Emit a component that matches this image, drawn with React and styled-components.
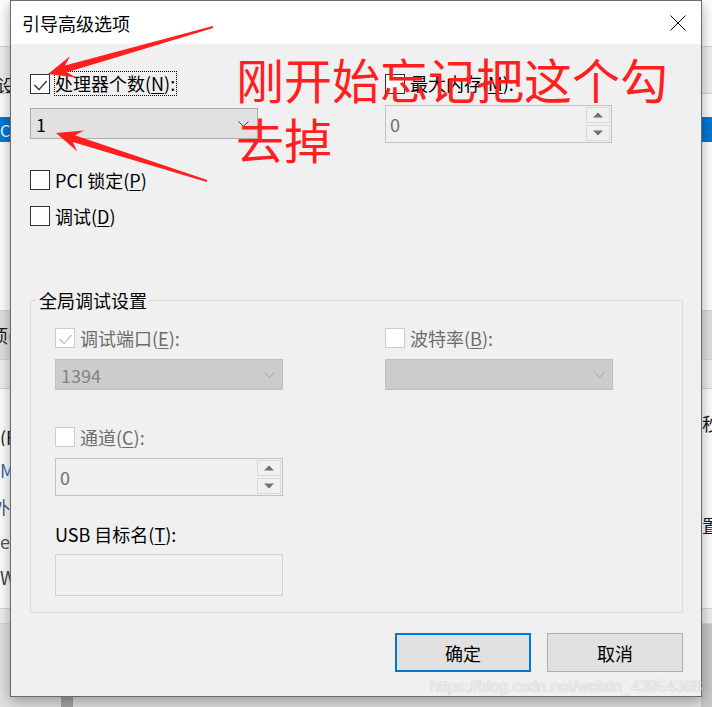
import React from 'react';
import styled, { createGlobalStyle } from 'styled-components';

const FONT = `"Noto Sans CJK SC", "Noto Sans", "Liberation Sans", sans-serif`;

const GlobalStyle = createGlobalStyle`
  *, *::before, *::after { box-sizing: border-box; }
  html, body { margin: 0; padding: 0; }
  body { width: 712px; height: 707px; overflow: hidden; background: #ffffff; font-family: ${FONT}; }
`;

const Desktop = styled.div`
  position: relative;
  width: 712px;
  height: 707px;
  overflow: hidden;
  font-family: ${FONT};
`;

/* ---------- background window ---------- */
const BgWindow = styled.div`
  display: flex;
  flex-direction: column;
  width: 100%;
  height: 100%;
`;

const BgRow = styled.div`
  display: grid;
  grid-template-columns: 10px 691px 1fr;
  height: ${(p) => p.$h}px;
  background: ${(p) => p.$bg};
  border-bottom: ${(p) => (p.$line ? '1px solid #d6d6d6' : 'none')};
  color: ${(p) => p.$color || '#1a1a1a'};
  font-size: ${(p) => p.$size || 18}px;
`;

const BgCell = styled.div`
  overflow: hidden;
  white-space: nowrap;
  line-height: 18px;
  display: flex;
  align-items: ${(p) => p.$align || 'center'};
  padding-left: ${(p) => p.$pl || 0}px;
  background: ${(p) => p.$bg || 'transparent'};
`;

const BgText = styled.span`
  display: inline-block;
  margin-left: ${(p) => p.$shift || 0}px;
  color: ${(p) => p.$color || 'inherit'};
`;

const ScrollThumb = styled.div`
  margin-left: 51px;
  width: 12px;
  height: 100%;
  background: #a6a6a6;
`;

/* ---------- dialog ---------- */
const Dialog = styled.div`
  position: absolute;
  left: 10px;
  top: 0;
  width: 692px;
  height: 697px;
  border: 1px solid #6a6a6a;
  background: #f0f0f0;
  box-shadow: 0 4px 14px rgba(0, 0, 0, 0.35);
  display: flex;
  flex-direction: column;
`;

const TitleBar = styled.div`
  flex: none;
  height: 43px;
  background: #ffffff;
  display: flex;
  align-items: center;
  justify-content: space-between;
  padding: 0 15px 0 11px;
  font-size: 18px;
  color: #000;
`;

const TitleText = styled.span`
  line-height: 20px;
`;

const Body = styled.div`
  flex: 1;
  display: flex;
  flex-direction: column;
  padding: 27px 18px 0 19px;
`;

const Columns = styled.div`
  display: grid;
  grid-template-columns: ${(p) => p.$cols};
  align-items: start;
`;

const Col = styled.div`
  display: flex;
  flex-direction: column;
  align-items: flex-start;
`;

const CheckRow = styled.div`
  display: flex;
  align-items: center;
  gap: 4px;
  height: ${(p) => p.$h || 20}px;
  margin-top: ${(p) => p.$mt || 0}px;
`;

const Box = styled.span`
  flex: none;
  width: 20px;
  height: 20px;
  display: inline-flex;
  background: #ffffff;
  border: 1px solid ${(p) => (p.$disabled ? '#cccccc' : '#333333')};
`;

const Label = styled.span`
  font-size: 18px;
  line-height: 23px;
  white-space: nowrap;
  color: ${(p) => (p.$disabled ? '#6d6d6d' : '#000')};
  border: 1px ${(p) => (p.$focus ? 'dotted #000' : 'solid transparent')};
  padding: 0 1px 0 0;
`;

const Key = styled.span`
  text-decoration: underline;
  text-underline-offset: 2px;
  text-decoration-thickness: 1px;
`;

const Combo = styled.div`
  width: ${(p) => p.$w}px;
  height: 31px;
  margin-top: ${(p) => p.$mt || 0}px;
  display: flex;
  align-items: center;
  justify-content: space-between;
  padding: 0 ${(p) => (p.$disabled ? 7 : 8)}px 0 5px;
  background: ${(p) => (p.$disabled ? '#cccccc' : '#e1e1e1')};
  border: 1px solid ${(p) => (p.$disabled ? '#bfbfbf' : '#adadad')};
  color: ${(p) => (p.$disabled ? '#838383' : '#000')};
  font-size: 18px;
  line-height: 20px;
`;

const Spin = styled.div`
  width: ${(p) => p.$w}px;
  height: 38px;
  margin-top: ${(p) => p.$mt || 0}px;
  display: flex;
  border: 1px solid #c2c2c2;
  background: #f0f0f0;
`;

const SpinValue = styled.div`
  flex: 1;
  display: flex;
  align-items: center;
  padding-left: 4px;
  color: #6d6d6d;
  font-size: 18px;
  line-height: 20px;
`;

const SpinButtons = styled.div`
  flex: none;
  width: 26px;
  display: flex;
  flex-direction: column;
  gap: 2px;
  padding: 1px;
`;

const SpinBtn = styled.div`
  flex: 1;
  display: flex;
  align-items: center;
  justify-content: center;
  border: 1px solid #d9d9d9;
  background: #f0f0f0;
`;

const TextField = styled.div`
  width: ${(p) => p.$w}px;
  height: 42px;
  margin-top: ${(p) => p.$mt || 0}px;
  border: 1px solid #d2d2d2;
  background: #f0f0f0;
`;

const PlainLabel = styled.div`
  margin-top: ${(p) => p.$mt || 0}px;
  font-size: 18px;
  line-height: 20px;
  color: #000;
  white-space: nowrap;
`;

const Group = styled.fieldset`
  margin: 64px 0 0 0;
  padding: 0;
  min-width: 0;
  border: 1px solid #dcdcdc;
`;

const Legend = styled.legend`
  margin-left: 6px;
  padding: 0 2px;
  font-size: 18px;
  line-height: 20px;
  color: #000;
`;

const GroupInner = styled.div`
  padding: 18px 0 16px 24px;
`;

const ButtonRow = styled.div`
  display: flex;
  justify-content: flex-end;
  gap: 16px;
  margin-top: 20px;
`;

const Button = styled.div`
  width: 136px;
  height: 39px;
  display: flex;
  align-items: center;
  justify-content: center;
  background: #e1e1e1;
  border: ${(p) => (p.$primary ? '2px solid #0078d7' : '1px solid #adadad')};
  font-size: 18px;
  color: #000;
`;

/* ---------- overlays ---------- */
const Annotation = styled.svg`
  position: absolute;
  left: 0;
  top: 0;
  pointer-events: none;
`;

const RedNote = styled.div`
  position: absolute;
  left: 236px;
  top: 48px;
  font-family: ${FONT};
  font-size: 48px;
  line-height: 60px;
  color: #ff1f1f;
  white-space: nowrap;
  pointer-events: none;
`;

const Watermark = styled.div`
  position: absolute;
  left: 430px;
  top: 677px;
  font-family: "Liberation Sans", Arial, sans-serif;
  font-size: 16px;
  line-height: 20px;
  color: rgba(255, 255, 255, 0.85);
  text-shadow: 0 0 1px rgba(0, 0, 0, 0.35);
  white-space: nowrap;
  pointer-events: none;
`;

/* ---------- small drawings ---------- */
const CheckMark = ({ color }) => (
  <svg width="18" height="18" viewBox="0 0 18 18">
    <polyline points="3.3,10 8,14.6 15.7,6" fill="none" stroke={color} strokeWidth="1.4" />
  </svg>
);

const Chevron = ({ color }) => (
  <svg width="11" height="6" viewBox="0 0 11 6">
    <polyline points="0.5,0.5 5.5,5.3 10.5,0.5" fill="none" stroke={color} strokeWidth="1" />
  </svg>
);

const Tri = ({ up }) => (
  <svg width="10" height="6" viewBox="0 0 10 6">
    <polygon points={up ? '0,5.5 10,5.5 5,0.5' : '0,0.5 10,0.5 5,5.5'} fill="#707070" />
  </svg>
);

const CloseIcon = () => (
  <svg width="16" height="16" viewBox="0 0 16 16">
    <path d="M0.5 0.5 L15.5 15.5 M15.5 0.5 L0.5 15.5" stroke="#000" strokeWidth="1" fill="none" />
  </svg>
);

function arrowPoints(tx, ty, px, py, hl = 26, hw = 11, sw = 3.6, tw = 0.9, notch = 0.72) {
  const dx = px - tx;
  const dy = py - ty;
  const L = Math.hypot(dx, dy);
  const ux = dx / L;
  const uy = dy / L;
  const nx = -uy;
  const ny = ux;
  const bx = px - ux * hl;
  const by = py - uy * hl;
  const ix = px - ux * hl * notch;
  const iy = py - uy * hl * notch;
  const pts = [
    [tx + nx * tw, ty + ny * tw],
    [ix + nx * sw, iy + ny * sw],
    [bx + nx * hw, by + ny * hw],
    [px, py],
    [bx - nx * hw, by - ny * hw],
    [ix - nx * sw, iy - ny * sw],
    [tx - nx * tw, ty - ny * tw],
  ];
  return pts.map((p) => p.map((v) => v.toFixed(1)).join(',')).join(' ');
}

const Check = ({ checked, disabled, label, focus, rowH, mt }) => (
  <CheckRow $h={rowH} $mt={mt}>
    <Box $disabled={disabled}>{checked && <CheckMark color={disabled ? '#c4c4c4' : '#333'} />}</Box>
    <Label $disabled={disabled} $focus={focus}>{label}</Label>
  </CheckRow>
);

const SpinBox = ({ w, mt, value }) => (
  <Spin $w={w} $mt={mt}>
    <SpinValue>{value}</SpinValue>
    <SpinButtons>
      <SpinBtn><Tri up /></SpinBtn>
      <SpinBtn><Tri /></SpinBtn>
    </SpinButtons>
  </Spin>
);

const bgRows = [
  { h: 47, bg: '#ffffff', line: true },
  { h: 30, bg: '#f0f0f0' },
  { h: 17, bg: '#f0f0f0', line: true, left: '设', shift: -3 },
  { h: 23, bg: '#ffffff' },
  { h: 25, bg: '#0078d7', color: '#ffffff', left: 'C:\\', size: 16 },
  { h: 169, bg: '#ffffff', line: true },
  { h: 49, bg: '#e1e1e1', line: true, left: '项(', shift: -10 },
  { h: 29, bg: '#f0f0f0', line: true },
  { h: 25, bg: '#ffffff' },
  { h: 32, bg: '#ffffff', left: '(F', leftAlign: 'flex-end', right: '秒', rightAlign: 'flex-start' },
  { h: 33, bg: '#ffffff', left: 'M', leftColor: '#3d6cae', leftAlign: 'flex-end' },
  { h: 37, bg: '#ffffff', left: '外', shift: -8, leftColor: '#4a5a70', leftAlign: 'flex-end' },
  { h: 34, bg: '#ffffff', left: 'e', leftColor: '#555', leftAlign: 'flex-end', right: '置', rightAlign: 'flex-start' },
  { h: 36, bg: '#ffffff', left: 'W', leftColor: '#444', leftAlign: 'flex-end' },
  { h: 23, bg: '#ffffff', line: true },
  { h: 15, bg: '#f0f0f0', line: true },
  { h: 83, bg: '#e2e2e2', rightBg: '#c9c9c9', thumb: true },
];

export default function App() {
  return (
    <>
      <GlobalStyle />
      <Desktop>
        <BgWindow>
          {bgRows.map((r, i) => (
            <BgRow key={i} $h={r.h} $bg={r.bg} $line={r.line} $color={r.color} $size={r.size}>
              <BgCell $align={r.leftAlign}>
                {r.left && <BgText $shift={r.shift} $color={r.leftColor}>{r.left}</BgText>}
              </BgCell>
              <BgCell>{r.thumb && <ScrollThumb />}</BgCell>
              <BgCell $align={r.rightAlign} $pl={1} $bg={r.rightBg}>
                {r.right && <BgText>{r.right}</BgText>}
              </BgCell>
            </BgRow>
          ))}
        </BgWindow>

        <Dialog>
          <TitleBar>
            <TitleText>引导高级选项</TitleText>
            <CloseIcon />
          </TitleBar>
          <Body>
            <Columns $cols="355px 227px">
              <Col>
                <Check rowH={25} checked focus label={<>处理器个数(<Key>N</Key>):</>} />
                <Combo $w={228} $mt={12}>
                  <span>1</span>
                  <Chevron color="#444" />
                </Combo>
                <Check mt={31} label={<>PCI 锁定(<Key>P</Key>)</>} />
                <Check mt={16} label={<>调试(<Key>D</Key>)</>} />
              </Col>
              <Col>
                <Check rowH={25} label={<>最大内存(<Key>M</Key>):</>} />
                <SpinBox w={227} mt={9} value="0" />
              </Col>
            </Columns>

            <Group>
              <Legend>全局调试设置</Legend>
              <GroupInner>
                <Columns $cols="330px 228px">
                  <Col>
                    <Check checked disabled label={<>调试端口(<Key>E</Key>):</>} />
                    <Combo $w={228} $mt={11} $disabled>
                      <span>1394</span>
                      <Chevron color="#a3a3a3" />
                    </Combo>
                    <Check mt={37} disabled label={<>通道(<Key>C</Key>):</>} />
                    <SpinBox w={228} mt={11} value="0" />
                    <PlainLabel $mt={28}>USB 目标名(<Key>T</Key>):</PlainLabel>
                    <TextField $w={228} $mt={10} />
                  </Col>
                  <Col>
                    <Check disabled label={<>波特率(<Key>B</Key>):</>} />
                    <Combo $w={228} $mt={11} $disabled>
                      <span />
                      <Chevron color="#a3a3a3" />
                    </Combo>
                  </Col>
                </Columns>
              </GroupInner>
            </Group>

            <ButtonRow>
              <Button $primary>确定</Button>
              <Button>取消</Button>
            </ButtonRow>
          </Body>
        </Dialog>

        <Annotation width="712" height="707" viewBox="0 0 712 707">
          <polygon points={arrowPoints(213, 27, 48, 74)} fill="#ff1f1f" />
          <polygon points={arrowPoints(207, 181, 56, 133)} fill="#ff1f1f" />
        </Annotation>
        <RedNote>
          刚开始忘记把这个勾
          <br />
          去掉
        </RedNote>
        <Watermark>https://blog.csdn.net/weixin_43954368</Watermark>
      </Desktop>
    </>
  );
}
